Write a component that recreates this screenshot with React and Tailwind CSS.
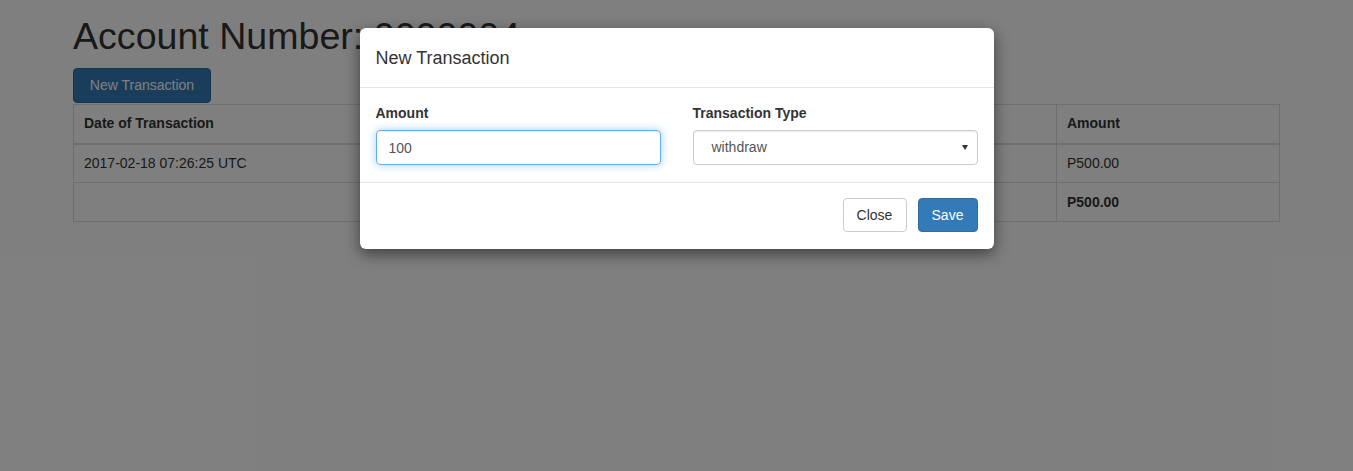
import { useState } from "react";

const rows = [
  { date: "2017-02-18 07:26:25 UTC", type: "deposit", amount: "P500.00" },
];

const App = () => {
  const [amount, setAmount] = useState("100");
  const [txType] = useState("withdraw");

  return (
    <div
      className="relative min-h-[471px] bg-white text-[#333] text-[14px]"
      style={{ fontFamily: '"Liberation Sans", Arial, sans-serif' }}
    >
      {/* Page */}
      <div className="px-[73px] pt-[16px]">
        <h1 className="text-[37.6px] leading-[41px] font-normal mb-[11px]">
          Account Number: 0000004
        </h1>
        <button className="h-[35px] w-[138px] rounded-[4px] border border-[#2e6da4] bg-[#337ab7] text-white text-[14px]">
          New Transaction
        </button>

        {/* Transactions table */}
        <table className="mt-[1px] w-full border-collapse border border-[#ddd]">
          <thead>
            <tr className="h-[39px]">
              <th className="w-[487px] border border-[#ddd] border-b-2 px-[10px] text-left font-bold">
                Date of Transaction
              </th>
              <th className="border border-[#ddd] border-b-2 px-[10px] text-left font-bold">
                Transaction Type
              </th>
              <th className="w-[223px] border border-[#ddd] border-b-2 px-[10px] text-left font-bold">
                Amount
              </th>
            </tr>
          </thead>
          <tbody>
            {rows.map((row) => (
              <tr key={row.date} className="h-[39px]">
                <td className="border border-[#ddd] px-[10px]">{row.date}</td>
                <td className="border border-[#ddd] px-[10px]">{row.type}</td>
                <td className="border border-[#ddd] px-[10px]">{row.amount}</td>
              </tr>
            ))}
            <tr className="h-[39px]">
              <td className="border border-[#ddd] px-[10px]"></td>
              <td className="border border-[#ddd] px-[10px] font-bold">Total</td>
              <td className="border border-[#ddd] px-[10px] font-bold">P500.00</td>
            </tr>
          </tbody>
        </table>
      </div>

      {/* Backdrop */}
      <div className="absolute inset-0 bg-black/50"></div>

      {/* Modal */}
      <div className="absolute inset-x-0 top-[28px] flex justify-center">
        <div className="w-[634px] rounded-[6px] bg-white shadow-[0_5px_15px_rgba(0,0,0,0.5)]">
          <div className="h-[60px] flex items-center px-[16px] pt-[2px] border-b border-[#e5e5e5]">
            <h4 className="text-[18px] text-[#333]">New Transaction</h4>
          </div>

          <div className="px-[16px] pt-[15px] pb-[17px] border-b border-[#e5e5e5]">
            <div className="grid grid-cols-2 gap-[32px]">
              <div>
                <label className="block font-bold leading-[20px] mb-[7px]">Amount</label>
                <input
                  value={amount}
                  onChange={(e) => setAmount(e.target.value)}
                  className="block w-full h-[35px] px-[12px] rounded-[4px] border border-[#66afe9] text-[#555] outline-none shadow-[inset_0_1px_1px_rgba(0,0,0,0.075),0_0_8px_rgba(102,175,233,0.6)]"
                />
              </div>
              <div>
                <label className="block font-bold leading-[20px] mb-[7px]">Transaction Type</label>
                <div className="flex items-center justify-between h-[35px] pl-[18px] pr-[9px] rounded-[4px] border border-[#ccc] text-[#555] shadow-[inset_0_1px_1px_rgba(0,0,0,0.075)]">
                  <span>{txType}</span>
                  <svg className="w-[6px] h-[5px]" viewBox="0 0 6 5">
                    <path d="M0 0h6L3 5z" fill="#333" />
                  </svg>
                </div>
              </div>
            </div>
          </div>

          <div className="flex justify-end gap-[11px] px-[16px] pt-[15px] pb-[17px]">
            <button className="h-[34px] w-[64px] rounded-[4px] border border-[#ccc] bg-white text-[#333]">
              Close
            </button>
            <button className="h-[34px] w-[60px] rounded-[4px] border border-[#2e6da4] bg-[#337ab7] text-white">
              Save
            </button>
          </div>
        </div>
      </div>
    </div>
  );
};

export default App;
